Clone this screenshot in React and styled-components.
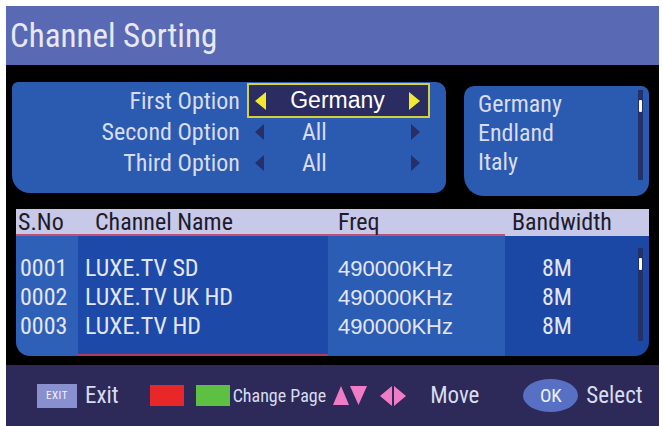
import React from 'react';
import styled, { createGlobalStyle } from 'styled-components';

const GlobalStyle = createGlobalStyle`
  html, body { margin: 0; padding: 0; background: #fff; }
  body {
    font-family: Roboto, "Liberation Sans", sans-serif;
    font-stretch: condensed;
  }
`;

const Frame = styled.div`
  width: 662px;
  height: 426px;
  box-sizing: border-box;
  padding: 6px 3px 0 6px;
  background: #fff;
  overflow: hidden;
`;

const Screen = styled.div`
  height: 100%;
  background: #000;
  display: flex;
  flex-direction: column;
`;

const TitleBar = styled.div`
  height: 59px;
  flex-shrink: 0;
  display: flex;
  align-items: center;
  padding-left: 4px;
  background: #5a69b4;
  color: #e8e8f4;
  font-size: 33px;
`;

const Main = styled.div`
  flex: 1;
  display: flex;
  flex-direction: column;
  padding: 17px 10px 0 6px;
`;

const OptionsRow = styled.div`
  display: flex;
  align-items: flex-start;
  gap: 18px;
`;

const OptionsPanel = styled.div`
  width: 434px;
  height: 111px;
  box-sizing: border-box;
  padding: 3px 0;
  background: #2b5bb0;
  border-radius: 6px 10px 12px 18px;
  display: flex;
  flex-direction: column;
`;

const OptionLine = styled.div`
  display: grid;
  grid-template-columns: 228px 183px;
  column-gap: 7px;
  height: 31px;
  align-items: center;
`;

const Label = styled.div`
  text-align: right;
  font-size: 24px;
  color: #d8dcf0;
`;

const Selector = styled.div`
  display: flex;
  align-items: center;
  box-sizing: border-box;
  height: ${p => (p.$active ? '35px' : '31px')};
  margin: ${p => (p.$active ? '-2px 0' : '0')};
  padding: 0 8px 0 6px;
  border: 2px solid ${p => (p.$active ? '#d4d03a' : 'transparent')};
  background: ${p => (p.$active ? '#2a2c62' : 'transparent')};
`;

const Value = styled.div`
  flex: 1;
  text-align: ${p => (p.$active ? 'center' : 'left')};
  padding-left: ${p => (p.$active ? '0' : '38px')};
  font-family: ${p => (p.$active ? '"Liberation Sans", Arial, sans-serif' : 'inherit')};
  font-size: ${p => (p.$active ? '23px' : '24px')};
  color: ${p => (p.$active ? '#ffffff' : '#d8dcf0')};
`;

const ListPanel = styled.div`
  width: 185px;
  height: 110px;
  margin-top: 4px;
  box-sizing: border-box;
  padding: 4px 6px 0 14px;
  background: #2b5bb0;
  border-radius: 10px 8px 14px 20px;
  display: flex;
`;

const ListItems = styled.div`
  flex: 1;
  display: flex;
  flex-direction: column;
`;

const ListItem = styled.div`
  height: 29px;
  line-height: 29px;
  font-size: 24px;
  color: #d8dcf0;
`;

const Track = styled.div`
  width: 5px;
  height: ${p => p.$height}px;
  display: flex;
  flex-direction: column;
  align-items: center;
  padding-top: 10px;
  box-sizing: border-box;
  background: #24306a;
`;

const Thumb = styled.div`
  width: 3px;
  height: 12px;
  background: #fff;
  border-radius: 1px;
`;

const Table = styled.div`
  margin: 13px 0 0 4px;
  display: flex;
  flex-direction: column;
`;

const HeaderRow = styled.div`
  display: grid;
  grid-template-columns: 62px 250px 177px 144px;
  height: 27px;
  background: #c8c8e8;
`;

const HeaderCell = styled.div`
  padding-left: ${p => p.$pad}px;
  font-size: 24px;
  line-height: 27px;
  color: #1c1c2c;
  box-shadow: ${p => (p.$line ? 'inset 0 -2px 0 #c05078' : 'none')};
`;

const Body = styled.div`
  display: grid;
  grid-template-columns: 62px 250px 177px 144px;
  height: 120px;
`;

const BodyCol = styled.div`
  display: flex;
  box-sizing: border-box;
  padding: 18px 0 0 ${p => p.$pad}px;
  background: ${p => p.$bg};
  border-radius: ${p => p.$radius || '0'};
  box-shadow: ${p => (p.$line ? 'inset 0 -2px 0 #b03a60' : 'none')};
`;

const Cells = styled.div`
  flex: 1;
  display: flex;
  flex-direction: column;
`;

const Cell = styled.div`
  height: 29px;
  line-height: 29px;
  white-space: nowrap;
  font-size: ${p => (p.$wide ? '22px' : '24px')};
  font-family: ${p => (p.$wide ? '"Liberation Sans", Arial, sans-serif' : 'inherit')};
  color: #e4e6f6;
`;

const TableScroll = styled.div`
  margin: -6px 6px 0 0;
`;

const Footer = styled.div`
  height: 61px;
  flex-shrink: 0;
  display: flex;
  align-items: center;
  padding-left: 31px;
  background: #2d2a5a;
  color: #d8dcf0;
`;

const Hint = styled.div`
  display: flex;
  align-items: center;
  gap: ${p => p.$gap ?? 8}px;
  margin-left: ${p => p.$ml || 0}px;
  font-size: ${p => p.$size || 23}px;
`;

const ExitKey = styled.div`
  width: 40px;
  height: 24px;
  display: flex;
  align-items: center;
  justify-content: center;
  background: #8890d0;
  color: #f0f0ff;
  font-size: 11px;
  letter-spacing: 0.5px;
`;

const ColorKey = styled.div`
  width: 34px;
  height: 21px;
  background: ${p => p.$color};
`;

const OkKey = styled.div`
  width: 55px;
  height: 33px;
  border-radius: 50%;
  display: flex;
  align-items: center;
  justify-content: center;
  background: #5870c4;
  color: #eef0ff;
  font-size: 19px;
`;

const Arrow = ({ dir, color, w = 10, h = 14 }) => {
  const pts = {
    left: `${w},0 0,${h / 2} ${w},${h}`,
    right: `0,0 ${w},${h / 2} 0,${h}`,
    up: `${w / 2},0 ${w},${h} 0,${h}`,
    down: `0,0 ${w},0 ${w / 2},${h}`,
  }[dir];
  return (
    <svg width={w} height={h} viewBox={`0 0 ${w} ${h}`}>
      <polygon points={pts} fill={color} />
    </svg>
  );
};

const options = [
  { label: 'First Option', value: 'Germany', active: true },
  { label: 'Second Option', value: 'All' },
  { label: 'Third Option', value: 'All' },
];

const countries = ['Germany', 'Endland', 'Italy'];

const channels = [
  { no: '0001', name: 'LUXE.TV SD', freq: '490000KHz', bw: '8M' },
  { no: '0002', name: 'LUXE.TV UK HD', freq: '490000KHz', bw: '8M' },
  { no: '0003', name: 'LUXE.TV HD', freq: '490000KHz', bw: '8M' },
];

const App = () => (
  <>
    <GlobalStyle />
    <Frame>
      <Screen>
        <TitleBar>Channel Sorting</TitleBar>
        <Main>
          <OptionsRow>
            <OptionsPanel>
              {options.map(o => (
                <OptionLine key={o.label}>
                  <Label>{o.label}</Label>
                  <Selector $active={o.active}>
                    <Arrow
                      dir="left"
                      color={o.active ? '#f2e830' : '#25306a'}
                      w={o.active ? 11 : 9}
                      h={o.active ? 18 : 16}
                    />
                    <Value $active={o.active}>{o.value}</Value>
                    <Arrow
                      dir="right"
                      color={o.active ? '#f2e830' : '#25306a'}
                      w={o.active ? 11 : 9}
                      h={o.active ? 18 : 16}
                    />
                  </Selector>
                </OptionLine>
              ))}
            </OptionsPanel>
            <ListPanel>
              <ListItems>
                {countries.map(c => (
                  <ListItem key={c}>{c}</ListItem>
                ))}
              </ListItems>
              <Track $height={90}>
                <Thumb />
              </Track>
            </ListPanel>
          </OptionsRow>

          <Table>
            <HeaderRow>
              <HeaderCell $pad={2} $line>S.No</HeaderCell>
              <HeaderCell $pad={17} $line>Channel Name</HeaderCell>
              <HeaderCell $pad={10} $line>Freq</HeaderCell>
              <HeaderCell $pad={7}>Bandwidth</HeaderCell>
            </HeaderRow>
            <Body>
              <BodyCol $pad={4} $bg="#2f60b8" $radius="0 0 0 14px">
                <Cells>
                  {channels.map(c => <Cell key={c.no}>{c.no}</Cell>)}
                </Cells>
              </BodyCol>
              <BodyCol $pad={7} $bg="#1d4aa8" $line>
                <Cells>
                  {channels.map(c => <Cell key={c.no}>{c.name}</Cell>)}
                </Cells>
              </BodyCol>
              <BodyCol $pad={10} $bg="#2c5db5">
                <Cells>
                  {channels.map(c => <Cell key={c.no} $wide>{c.freq}</Cell>)}
                </Cells>
              </BodyCol>
              <BodyCol $pad={37} $bg="#1c48a5" $radius="0 0 14px 0">
                <Cells>
                  {channels.map(c => <Cell key={c.no}>{c.bw}</Cell>)}
                </Cells>
                <TableScroll>
                  <Track $height={93}>
                    <Thumb />
                  </Track>
                </TableScroll>
              </BodyCol>
            </Body>
          </Table>
        </Main>
        <Footer>
          <Hint>
            <ExitKey>EXIT</ExitKey>
            Exit
          </Hint>
          <Hint $ml={31}>
            <ColorKey $color="#e82828" />
          </Hint>
          <Hint $ml={12} $gap={3} $size={18}>
            <ColorKey $color="#5ec042" />
            Change Page
          </Hint>
          <Hint $ml={7} $gap={1}>
            <Arrow dir="up" color="#f07cc8" w={16} h={19} />
            <Arrow dir="down" color="#f07cc8" w={17} h={19} />
          </Hint>
          <Hint $ml={13} $gap={2}>
            <Arrow dir="left" color="#f07cc8" w={12} h={20} />
            <Arrow dir="right" color="#f07cc8" w={12} h={20} />
          </Hint>
          <Hint $ml={24}>Move</Hint>
          <Hint $ml={44} $size={23}>
            <OkKey>OK</OkKey>
            Select
          </Hint>
        </Footer>
      </Screen>
    </Frame>
  </>
);

export default App;
